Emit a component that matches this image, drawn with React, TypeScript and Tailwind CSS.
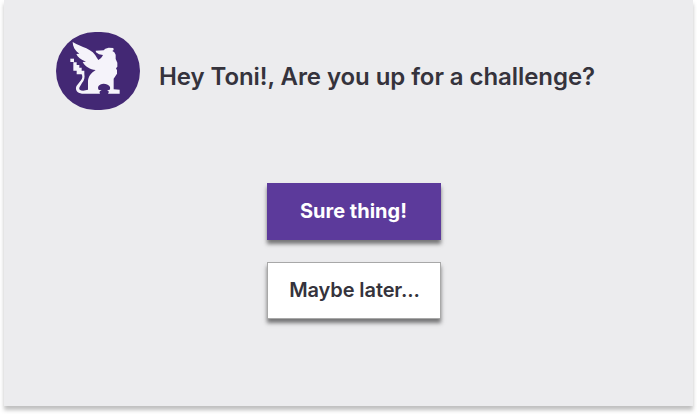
function GriffinLogo() {
  return (
    <svg viewBox="18 18 252 234" className="h-[78px] w-[84px] shrink-0" role="img" aria-label="Griffin">
      <rect x="18" y="18" width="252" height="234" rx="117" fill="#432874" />
      <g fill="#f5f3fa">
        <path d="M68 48C83 57 96 61 109 67C124 74 135 83 141 96L145 102C151 99 156 94 159 87L147 85L138 79L137 74L161 73L166 68L176 65L190 66L191 72L187 75L193 79L197 86L197 99L202 110V122L198 127L201 133V143L196 151L191 158V190L209 191V203H174C178 199 177 194 171 192H178C185 185 177 173 161 173C146 173 140 185 147 192H155C149 194 147 199 150 203H96C81 201 74 190 80 179L93 163C98 157 98 151 95 145H80V134H70V109H80V117H88V125H95V134H103V144C105 154 103 163 96 171L89 183C85 190 91 194 99 194L114 191V164C116 150 123 141 137 132C120 130 106 123 98 108L108 107C92 101 83 94 79 84L88 83C75 74 68 62 68 48Z" />
        <path d="M61 98h11v10H61z" />
      </g>
    </svg>
  );
}

export default function App() {
  return (
    <div className="h-[414px] overflow-hidden bg-white pr-1 pl-1 font-['Inter',sans-serif] text-[#35333c]">
      <main className="flex h-[406px] flex-col bg-[#ececee] pt-8 shadow-[0_4px_4px_rgba(0,0,0,0.25)]">
        <header className="flex items-start pl-[52px]">
          <GriffinLogo />
          <h1 className="mt-[30px] ml-[19px] text-[24px] leading-[30px] font-semibold tracking-[-0.07px] whitespace-nowrap">
            Hey Toni!, Are you up for a challenge?
          </h1>
        </header>
        <div className="mt-[73px] ml-[263px] flex w-[174px] flex-col gap-[22px]">
          <button className="h-[57px] bg-[#5c3a9b] pr-px pb-[2px] text-[20px] leading-[30px] font-bold text-white shadow-[0_4px_4px_rgba(0,0,0,0.5)]">
            Sure thing!
          </button>
          <button className="h-[57px] border border-[#a8a8a8] bg-white pb-[2px] pl-px text-[20px] leading-[30px] font-semibold tracking-[-0.1px] shadow-[0_4px_4px_rgba(0,0,0,0.5)]">
            Maybe later...
          </button>
        </div>
      </main>
    </div>
  );
}
